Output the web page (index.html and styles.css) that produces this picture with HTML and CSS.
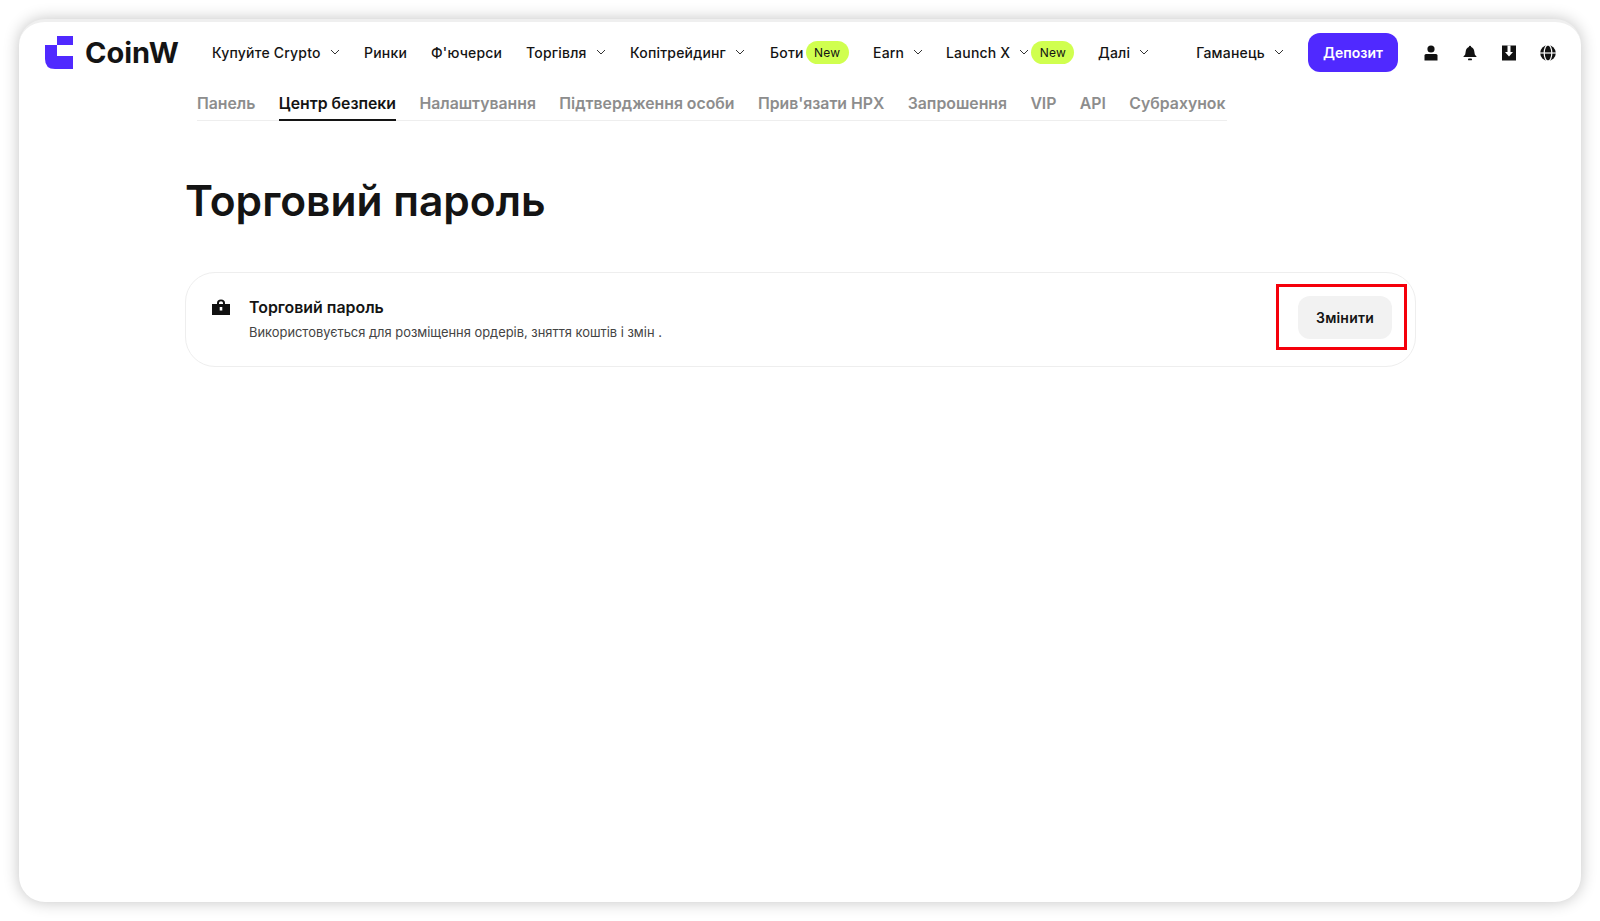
FILE: index.html
```html
<!DOCTYPE html>
<html lang="en">
<head>
    <meta charset="UTF-8">
    <meta name="viewport" content="width=device-width, initial-scale=1.0">
    <title>Торговий пароль</title>
    <link rel="stylesheet" href="styles.css">
</head>
<body>
    <div class="window">
        <!-- Top navigation -->
        <header class="topbar">
            <a class="logo" href="#">
                <svg class="logo-mark" viewBox="0 0 28 33" width="28" height="33">
                    <path d="M12 0H28V9H12Z M0 9H12V20H28V33H10Q0 33 0 23Z" fill="#5029ff"/>
                </svg>
                <span class="logo-text">CoinW</span>
            </a>
            <nav class="main-nav">
                <a href="#" class="nav-item w-buy">Купуйте Crypto <svg class="chev" viewBox="0 0 10 6"><path d="M1 1l4 4 4-4"/></svg></a>
                <a href="#" class="nav-item w-markets">Ринки</a>
                <a href="#" class="nav-item w-futures">Ф'ючерси</a>
                <a href="#" class="nav-item w-trade">Торгівля <svg class="chev" viewBox="0 0 10 6"><path d="M1 1l4 4 4-4"/></svg></a>
                <a href="#" class="nav-item w-copy">Копітрейдинг <svg class="chev" viewBox="0 0 10 6"><path d="M1 1l4 4 4-4"/></svg></a>
                <a href="#" class="nav-item w-bots">Боти <span class="badge">New</span></a>
                <a href="#" class="nav-item w-earn">Earn <svg class="chev" viewBox="0 0 10 6"><path d="M1 1l4 4 4-4"/></svg></a>
                <a href="#" class="nav-item w-launch">Launch X <svg class="chev" viewBox="0 0 10 6"><path d="M1 1l4 4 4-4"/></svg> <span class="badge">New</span></a>
                <a href="#" class="nav-item">Далі <svg class="chev" viewBox="0 0 10 6"><path d="M1 1l4 4 4-4"/></svg></a>
            </nav>
            <div class="top-actions">
                <a href="#" class="nav-item">Гаманець <svg class="chev" viewBox="0 0 10 6"><path d="M1 1l4 4 4-4"/></svg></a>
                <a href="#" class="deposit-btn">Депозит</a>
                <div class="icon-row">
                    <svg class="top-icon" viewBox="0 0 16 16"><circle cx="8" cy="4" r="3.6"/><path d="M1.5 10.5Q1.5 9 3 9H13Q14.500 9 14.500 10.500V15.500H1.500Z"/></svg>
                    <svg class="top-icon" viewBox="0 0 16 16"><path d="M8 .8Q9 .8 9.200 2Q12 3 12.300 6.500L12.800 9.500L14.800 12H1.200L3.200 9.500L3.700 6.500Q4 3 6.800 2Q7 .8 8 .8Z"/><rect x="6" y="13.500" width="4" height="1.800" rx=".9"/></svg>
                    <svg class="top-icon" viewBox="0 0 16 16"><path d="M1 .5H15V15.500H1Z"/><path class="icon-cut" d="M6.500 .5H9.500V7H12L8 11.500L4 7H6.500Z"/></svg>
                    <svg class="top-icon" viewBox="0 0 16 16"><circle cx="8" cy="8" r="7.800"/><ellipse class="icon-line" cx="8" cy="8" rx="3.800" ry="8"/><path class="icon-line" d="M0 8H16"/></svg>
                </div>
            </div>
        </header>

        <!-- Account tabs -->
        <div class="tabs">
            <a href="#" class="tab">Панель</a>
            <a href="#" class="tab active">Центр безпеки</a>
            <a href="#" class="tab">Налаштування</a>
            <a href="#" class="tab">Підтвердження особи</a>
            <a href="#" class="tab">Прив'язати HPX</a>
            <a href="#" class="tab">Запрошення</a>
            <a href="#" class="tab">VIP</a>
            <a href="#" class="tab">API</a>
            <a href="#" class="tab">Субрахунок</a>
        </div>

        <main class="content">
            <h1 class="page-title">Торговий пароль</h1>
            <section class="card">
                <svg class="card-icon" viewBox="0 0 18 16"><path d="M5 5V4Q5 .5 9 .5T13 4V5H18V16H0V5ZM7 5H11V4Q11 2.300 9 2.300T7 4ZM7.700 8V11.500H10.300V8Z" fill-rule="evenodd"/></svg>
                <div class="card-text">
                    <h3>Торговий пароль</h3>
                    <p>Використовується для розміщення ордерів, зняття коштів і змін .</p>
                </div>
                <button class="change-btn">Змінити</button>
                <div class="red-frame"></div>
            </section>
        </main>
    </div>
</body>
</html>
```

FILE: styles.css
```css
* {
    box-sizing: border-box;
}

html, body {
    height: 100%;
}

body {
    margin: 0;
    padding: 19px 19px 19px;
    overflow: hidden;
    background-color: #fff;
    font-family: 'Inter', 'Liberation Sans', sans-serif;
    color: #111;
}

a {
    color: inherit;
    text-decoration: none;
}

/* Window with the soft shadow round it */
.window {
    height: 883px;
    background-color: #fff;
    border-radius: 26px;
    box-shadow: 0 0 16px rgba(0, 0, 0, 0.24);
    border-top: 3px solid #efefef;
}

/* Top navigation */
.topbar {
    display: flex;
    align-items: center;
    height: 60px;
    padding: 0 25px 0 26px;
}

.logo {
    display: flex;
    align-items: center;
    gap: 12px;
    width: 167px;
}

.logo-text {
    font-size: 29px;
    font-weight: 700;
    color: #141414;
}

.main-nav {
    display: flex;
    align-items: center;
    flex: 1;
}

.nav-item {
    display: flex;
    align-items: center;
    gap: 9px;
    font-size: 14px;
    font-weight: 500;
    letter-spacing: 0.2px;
    white-space: nowrap;
    color: #141414;
}

.w-buy { width: 152px; }
.w-markets { width: 67px; }
.w-futures { width: 95px; }
.w-trade { width: 104px; }
.w-copy { width: 140px; }
.w-bots { width: 103px; gap: 2px; }
.w-earn { width: 73px; }
.w-launch { width: 152px; gap: 0; }
.w-launch .chev { margin: 0 2px 0 9px; }

.chev {
    width: 10px;
    height: 6px;
    fill: none;
    stroke: #333;
    stroke-width: 1;
}

.badge {
    display: inline-block;
    width: 43px;
    height: 23px;
    line-height: 23px;
    text-align: center;
    border-radius: 12px;
    background-color: #d0ff4f;
    font-size: 12px;
    font-weight: 400;
}

.top-actions {
    display: flex;
    align-items: center;
}

.deposit-btn {
    display: flex;
    align-items: center;
    justify-content: center;
    width: 90px;
    height: 39px;
    margin-left: 24px;
    border-radius: 12px;
    background-color: #5029ff;
    color: #fff;
    font-size: 14px;
    font-weight: 600;
}

.icon-row {
    display: flex;
    align-items: center;
    gap: 23px;
    margin: 2px 0 0 25px;
}

.top-icon {
    width: 16px;
    height: 16px;
    fill: #111;
}

.top-icon .icon-cut {
    fill: #fff;
}

.top-icon .icon-line {
    fill: none;
    stroke: #fff;
    stroke-width: 1.200;
}

/* Account tabs */
.tabs {
    display: flex;
    gap: 23.400px;
    width: 1030px;
    height: 31px;
    margin: 8px 0 0 178px;
    border-bottom: 1px solid #eee;
}

.tab {
    height: 31px;
    font-size: 15.800px;
    font-weight: 600;
    line-height: 27px;
    white-space: nowrap;
    color: #8d8d8d;
}

.tab.active {
    color: #141414;
    border-bottom: 2px solid #141414;
}

/* Page content */
.content {
    padding: 0 165px 0 166px;
}

.page-title {
    margin: 52px 0 43px;
    font-size: 42.500px;
    font-weight: 600;
    line-height: 56px;
    color: #141414;
}

.card {
    position: relative;
    display: flex;
    align-items: center;
    height: 95px;
    padding: 0 23px 0 26px;
    border: 1px solid #eeeeee;
    border-radius: 30px;
}

.card-icon {
    align-self: flex-start;
    width: 18px;
    height: 16px;
    margin-top: 26px;
    fill: #111;
}

.card-text {
    flex: 1;
    margin-left: 19px;
}

.card-text h3 {
    margin: 0 0 6px;
    font-size: 15.900px;
    font-weight: 600;
    line-height: 21px;
    color: #141414;
}

.card-text p {
    margin: 0;
    font-size: 12.900px;
    line-height: 18px;
    color: #444;
}

.change-btn {
    width: 94px;
    height: 43px;
    margin-bottom: 5px;
    border: none;
    border-radius: 12px;
    background-color: #f2f2f2;
    font-family: inherit;
    font-size: 14px;
    font-weight: 600;
    letter-spacing: 0.2px;
    color: #141414;
}

/* Red annotation over the button */
.red-frame {
    position: absolute;
    top: 11px;
    right: 8px;
    width: 131px;
    height: 66px;
    border: 3px solid #f5000b;
}
```
